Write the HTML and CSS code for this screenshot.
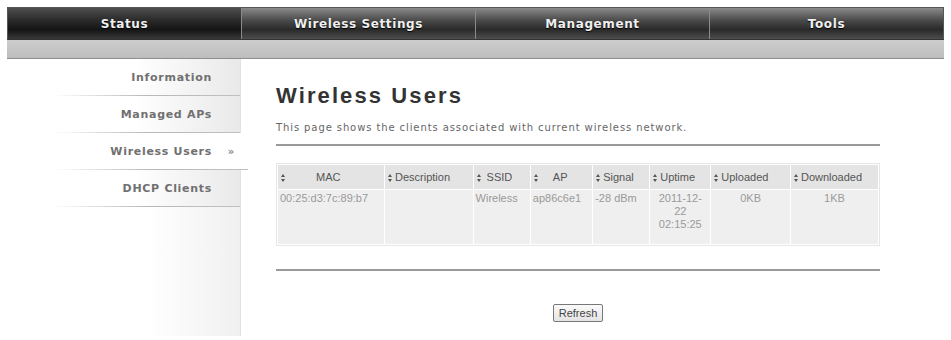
FILE: index.html
```html
<!DOCTYPE html>
<html lang="en">
<head>
  <meta charset="UTF-8">
  <title>Wireless Users</title>
  <link rel="stylesheet" href="styles.css">
</head>
<body>
  <div class="page">
    <!-- top menu -->
    <div class="nav">
      <div class="tab active">Status</div>
      <div class="tab">Wireless Settings</div>
      <div class="tab">Management</div>
      <div class="tab">Tools</div>
    </div>
    <div class="subbar"></div>

    <div class="main">
      <div class="sidebar">
        <div class="item">Information</div>
        <div class="item">Managed APs</div>
        <div class="item current">Wireless Users <span class="arrow">&raquo;</span></div>
        <div class="item">DHCP Clients</div>
        <div class="filler"></div>
      </div>

      <div class="content">
        <h1>Wireless Users</h1>
        <p class="desc">This page shows the clients associated with current wireless network.</p>
        <hr>

        <table class="users">
          <thead>
            <tr>
              <th class="c-mac"><span class="sort"></span><span class="mac-label">MAC</span></th>
              <th class="c-desc"><span class="sort"></span>Description</th>
              <th class="c-ssid"><span class="sort"></span> SSID</th>
              <th class="c-ap"><span class="sort"></span><span class="ap-label">AP</span></th>
              <th class="c-sig"><span class="sort"></span>Signal</th>
              <th class="c-up"><span class="sort"></span>Uptime</th>
              <th class="c-ul"><span class="sort"></span>Uploaded</th>
              <th class="c-dl"><span class="sort"></span>Downloaded</th>
            </tr>
          </thead>
          <tbody>
            <tr>
              <td>00:25:d3:7c:89:b7</td>
              <td></td>
              <td>Wireless</td>
              <td>ap86c6e1</td>
              <td>-28 dBm</td>
              <td class="center">2011-12-<br>22<br>02:15:25</td>
              <td class="center">0KB</td>
              <td class="center">1KB</td>
            </tr>
          </tbody>
        </table>

        <hr class="bottom">
        <div class="actions">
          <button type="button">Refresh</button>
        </div>
      </div>
    </div>
  </div>
</body>
</html>
```

FILE: styles.css
```css
body {
  margin: 0;
  background: #fff;
  font-family: "DejaVu Sans", Verdana, sans-serif;
}
.page {
  width: 937px;
  padding: 7px 7px 0 7px;
}
.nav {
  display: flex;
  height: 31px;
  background: linear-gradient(#8a8a8a, #4a4a4a 40%, #2a2a2a 70%, #4e4e4e);
  border: 1px solid #555;
  border-bottom: 1px solid #333;
}
.tab {
  flex: 1;
  display: flex;
  align-items: center;
  justify-content: center;
  color: #f0f0f0;
  font-size: 12px;
  font-weight: bold;
  letter-spacing: 0.6px;
  text-shadow: 0 1px 1px #000;
  border-left: 1px solid #8a8a8a;
}
.tab:first-child {
  border-left: none;
}
.tab.active {
  background: linear-gradient(#4e4e4e, #2a2a2a 40%, #151515 70%, #383838);
}
.subbar {
  height: 18px;
  background: linear-gradient(#cdcdcd, #bdbdbd);
  border-bottom: 1px solid #8e8e8e;
}
.main {
  display: flex;
}
.sidebar {
  width: 234px;
  display: flex;
  flex-direction: column;
  background: linear-gradient(to right, #fff 60%, #f0f0f0);
  border-right: 1px solid #e2e2e2;
  min-height: 277px;
}
.item {
  height: 36px;
  display: flex;
  align-items: center;
  justify-content: flex-end;
  padding-right: 28px;
  font-size: 11px;
  font-weight: bold;
  letter-spacing: 0.7px;
  color: #707070;
  background: linear-gradient(to right, #fff 55%, #e9e9e9);
  border-bottom: 1px solid #c8c8c8;
  border-image: linear-gradient(to right, rgba(190,190,190,0) 20%, #b8b8b8 60%, #c0c0c0) 1;
  border-top: 0;
  border-left: 0;
  border-right: 0;
}
.item.current {
  background: #fff;
  margin-right: -8px;
  padding-right: 36px;
  position: relative;
}
.arrow {
  position: absolute;
  right: 13px;
  font-size: 10px;
  color: #888;
}
.filler {
  flex: 1;
}
.content {
  flex: 1;
  padding: 0 64px 0 35px;
}
h1 {
  margin: 24px 0 0;
  font-family: "Liberation Sans", Arial, sans-serif;
  font-size: 22px;
  letter-spacing: 2.1px;
  color: #333;
}
.desc {
  margin: 13px 0 0;
  font-size: 10px;
  letter-spacing: 0.9px;
  color: #666;
}
hr {
  margin: 11px 0 0;
  height: 2px;
  border: 0;
  background: #9a9a9a;
}
.users {
  margin-top: 17px;
  width: 604px;
  border-collapse: separate;
  border-spacing: 1px;
  background: #fff;
  border: 1px solid #e6e6e6;
  font-family: "Liberation Sans", Arial, sans-serif;
  font-size: 11px;
}
th {
  height: 24px;
  padding: 0 2px;
  background: #e4e4e4;
  color: #555;
  font-weight: normal;
  white-space: nowrap;
  text-align: left;
}
td {
  height: 50px;
  padding: 2px 2px;
  vertical-align: top;
  background: #efefef;
  color: #9a9a9a;
  line-height: 13px;
}
td.center {
  text-align: center;
}
.c-mac { width: 103px; }
.c-desc { width: 85px; }
.c-ssid { width: 53px; }
.c-ap { width: 58px; }
.c-sig { width: 53px; }
.c-up { width: 57px; }
.c-ul { width: 76px; }
.c-dl { width: 84px; }
.sort {
  display: inline-block;
  width: 5px;
  height: 8px;
  margin: 0 2px 0 1px;
  vertical-align: -1px;
  position: relative;
}
.sort::before,
.sort::after {
  content: "";
  position: absolute;
  left: 0;
  border-left: 2.5px solid transparent;
  border-right: 2.5px solid transparent;
}
.sort::before {
  top: 0;
  border-bottom: 3px solid #555;
}
.sort::after {
  bottom: 0;
  border-top: 3px solid #555;
}
.mac-label {
  margin-left: 28px;
}
.ap-label {
  margin-left: 12px;
}
hr.bottom {
  margin-top: 23px;
}
.actions {
  text-align: center;
  margin-top: 31px;
}
button {
  font-family: "Liberation Sans", Arial, sans-serif;
  font-size: 11px;
  color: #444;
  padding: 2px 5px;
  background: linear-gradient(#fafafa, #e4e4e4);
  border: 1px solid #777;
  border-radius: 2px;
}
```
